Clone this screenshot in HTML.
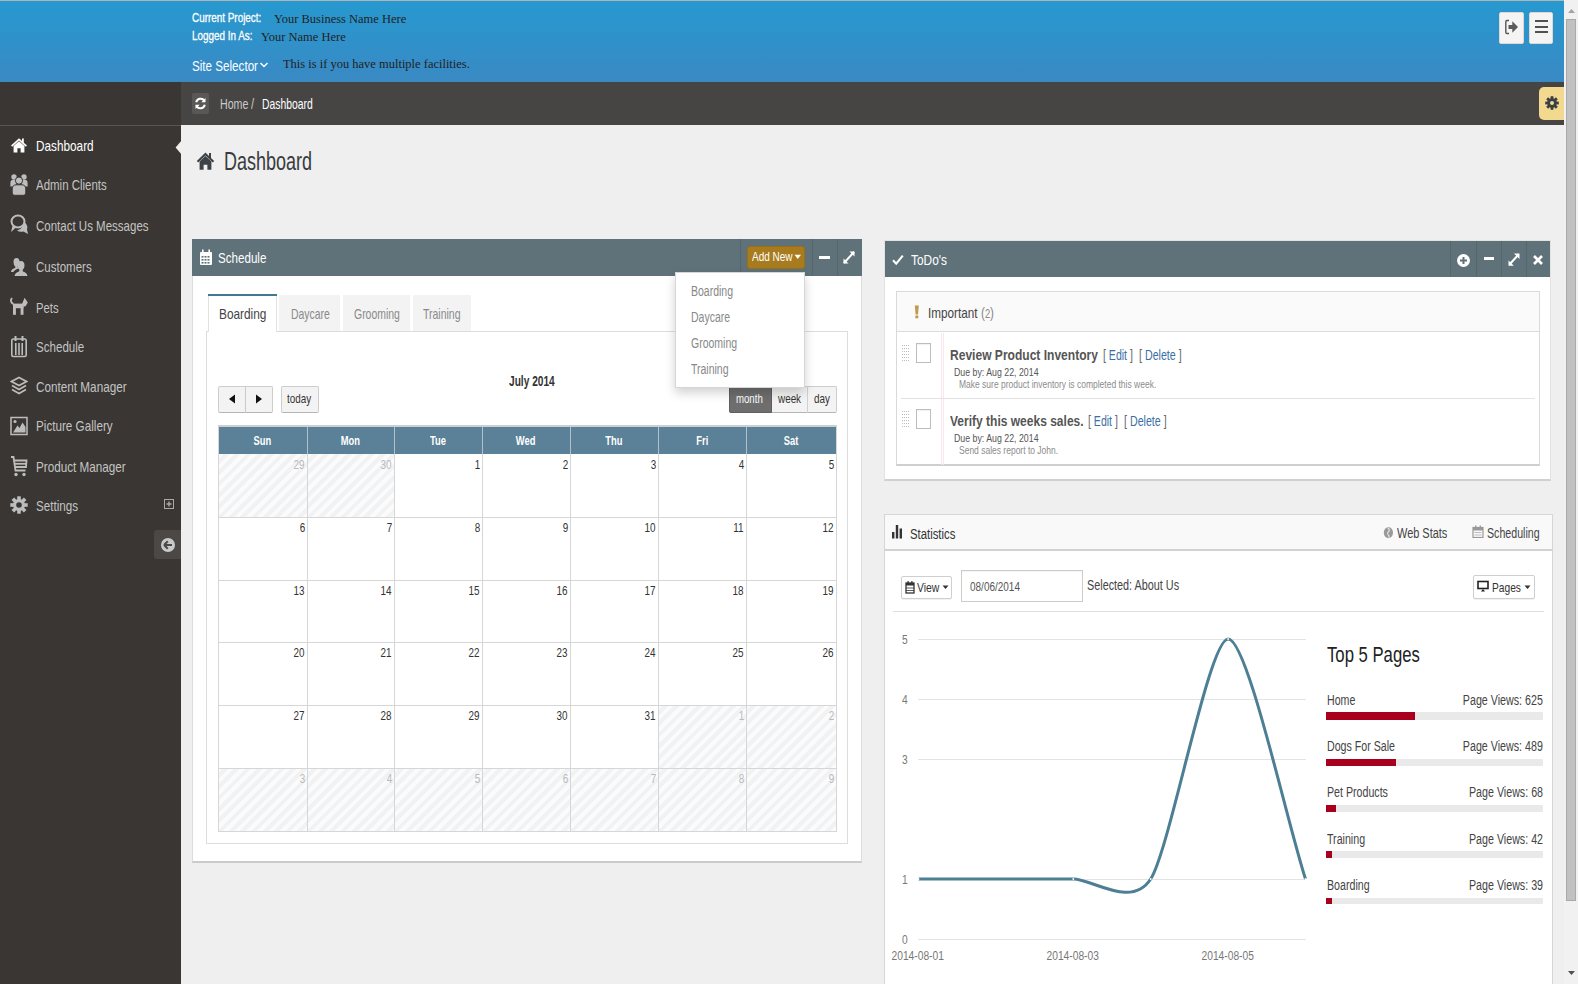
<!DOCTYPE html><html><head><meta charset="utf-8"><style>
html,body{margin:0;padding:0;width:1578px;height:984px;overflow:hidden;background:#efefef;font-family:"Liberation Sans",sans-serif;}
.r{position:absolute;box-sizing:border-box;}
.t{position:absolute;line-height:1;white-space:nowrap;}
</style></head><body>

<div class="r" style="left:0px;top:0px;width:1564px;height:1px;background:#b4b4b4"></div>
<div class="r" style="left:0px;top:1px;width:1564px;height:81px;background:linear-gradient(#2699d0,#3a89c3)"></div>
<div class="t" style="top:11.65px;left:191.70px;transform-origin:0 0;font-size:12.7px;color:#fff;transform:scaleX(0.78);-webkit-text-stroke:0.3px #fff;">Current Project:</div>
<div class="t" style="top:12.01px;left:274.00px;transform-origin:0 0;font-size:13px;color:#222;transform:scaleX(0.96);font-family:'Liberation Serif',serif;">Your Business Name Here</div>
<div class="t" style="top:29.95px;left:191.70px;transform-origin:0 0;font-size:12.7px;color:#fff;transform:scaleX(0.78);-webkit-text-stroke:0.3px #fff;">Logged In As:</div>
<div class="t" style="top:30.11px;left:260.50px;transform-origin:0 0;font-size:13px;color:#222;transform:scaleX(0.96);font-family:'Liberation Serif',serif;">Your Name Here</div>
<div class="t" style="top:58.20px;left:191.70px;transform-origin:0 0;font-size:15px;color:#fff;transform:scaleX(0.776);">Site Selector</div>
<svg class="r" style="left:259px;top:61px;" width="10" height="8" viewBox="0 0 10 8"><path d="M1.5 2 L5 5.5 L8.5 2" stroke="#fff" stroke-width="1.4" fill="none"/></svg>
<div class="t" style="top:56.61px;left:283.30px;transform-origin:0 0;font-size:13px;color:#222;transform:scaleX(0.96);font-family:'Liberation Serif',serif;">This is if you have multiple facilities.</div>
<div class="r" style="left:1499px;top:12px;width:25px;height:32px;background:#f4f4f4;border-radius:2px;border:1px solid #e0d8d0"></div>
<svg class="r" style="left:1504px;top:19px;" width="16" height="16" viewBox="0 0 16 16"><path d="M5 1.5 H3 Q1.8 1.5 1.8 2.7 V13.3 Q1.8 14.5 3 14.5 H5" stroke="#555" stroke-width="1.4" fill="none"/><path d="M4.5 6 H8.3 V2.3 L14 8 L8.3 13.7 V10 H4.5 Z" fill="#5a5a5a"/></svg>
<div class="r" style="left:1529px;top:12px;width:24px;height:32px;background:#f4f4f4;border-radius:2px;border:1px solid #e0d8d0"></div>
<div class="r" style="left:1535px;top:20px;width:13px;height:2px;background:#505050"></div>
<div class="r" style="left:1535px;top:26px;width:13px;height:2px;background:#505050"></div>
<div class="r" style="left:1535px;top:31px;width:13px;height:2px;background:#505050"></div>
<div class="r" style="left:0px;top:82px;width:181px;height:902px;background:#3a3633"></div>
<div class="r" style="left:0px;top:125px;width:181px;height:1px;background:#5a5552"></div>
<div class="t" style="top:138.10px;left:36.20px;transform-origin:0 0;font-size:15px;color:#fff;transform:scaleX(0.785);">Dashboard</div>
<div class="t" style="top:176.90px;left:36.20px;transform-origin:0 0;font-size:15px;color:#c4c4c4;transform:scaleX(0.765);">Admin Clients</div>
<div class="t" style="top:217.90px;left:36.20px;transform-origin:0 0;font-size:15px;color:#c4c4c4;transform:scaleX(0.767);">Contact Us Messages</div>
<div class="t" style="top:258.80px;left:36.20px;transform-origin:0 0;font-size:15px;color:#c4c4c4;transform:scaleX(0.768);">Customers</div>
<div class="t" style="top:299.80px;left:36.20px;transform-origin:0 0;font-size:15px;color:#c4c4c4;transform:scaleX(0.75);">Pets</div>
<div class="t" style="top:338.50px;left:36.20px;transform-origin:0 0;font-size:15px;color:#c4c4c4;transform:scaleX(0.772);">Schedule</div>
<div class="t" style="top:379.20px;left:36.20px;transform-origin:0 0;font-size:15px;color:#c4c4c4;transform:scaleX(0.782);">Content Manager</div>
<div class="t" style="top:418.30px;left:36.20px;transform-origin:0 0;font-size:15px;color:#c4c4c4;transform:scaleX(0.779);">Picture Gallery</div>
<div class="t" style="top:459.20px;left:36.20px;transform-origin:0 0;font-size:15px;color:#c4c4c4;transform:scaleX(0.78);">Product Manager</div>
<div class="t" style="top:498.10px;left:36.20px;transform-origin:0 0;font-size:15px;color:#c4c4c4;transform:scaleX(0.775);">Settings</div>
<svg class="r" style="left:10px;top:137px;" width="18" height="16" viewBox="0 0 18 16"><path d="M9 1.2 L1 8.6 L2.2 9.8 L9 3.6 L15.8 9.8 L17 8.6 L13.8 5.7 V1.5 H12 V4.1 Z" fill="#fff"/><path d="M3.6 9 L9 4.3 L14.4 9 V15.5 H10.6 V11.3 H7.4 V15.5 H3.6 Z" fill="#fff"/></svg>
<svg class="r" style="left:10px;top:173px;" width="18" height="23" viewBox="0 0 18 23"><g fill="#bdbdbd"><circle cx="4" cy="4" r="2.7"/><circle cx="14" cy="4" r="2.7"/><path d="M0.4 13.5 V10 Q0.4 6.8 3.5 6.8 H5.5 Q6.5 9 6 11.5 L5 13.5 Z"/><path d="M17.6 13.5 V10 Q17.6 6.8 14.5 6.8 H12.5 Q11.5 9 12 11.5 L13 13.5 Z"/></g><g fill="#bdbdbd" stroke="#3a3633" stroke-width="1"><circle cx="9" cy="7.6" r="3.6"/><path d="M2.2 20 V16 Q2.2 11.8 6.5 11.8 H11.5 Q15.8 11.8 15.8 16 V20 Q15.8 22.3 13.5 22.3 H4.5 Q2.2 22.3 2.2 20 Z"/></g></svg>
<svg class="r" style="left:10px;top:213px;" width="19" height="23" viewBox="0 0 19 23"><g fill="none" stroke="#bdbdbd" stroke-width="2"><ellipse cx="8" cy="8.5" rx="6.5" ry="6"/></g><path d="M2.5 13 L1 19 L6 14.5 Z" fill="#bdbdbd"/><path d="M14 9 Q18.5 12 17 16.5 L18 21 L13.5 18.5 Q9.5 19.5 7 17.5 Q12.5 16.5 14 9 Z" fill="#bdbdbd"/></svg>
<svg class="r" style="left:10px;top:257px;" width="18" height="20" viewBox="0 0 18 20"><g fill="#bdbdbd"><path d="M6.5 1 Q9.5 1 9.5 5 Q9.5 8.5 7.5 10 L8.5 11.5 Q4 13 3.5 15 H1 Q1 12 5 11 L5.5 10 Q3.5 8.5 3.5 5 Q3.5 1 6.5 1 Z"/><path d="M11 4 Q14.5 4 14.5 8.5 Q14.5 12 12.5 13 L13 14.5 Q17 15.5 17.5 19 H4.5 Q5 15.5 9 14.5 L9.5 13 Q7.5 12 7.5 8.5 Q7.5 4 11 4 Z"/></g></svg>
<svg class="r" style="left:10px;top:297px;" width="18" height="19" viewBox="0 0 18 19"><g fill="#bdbdbd"><path d="M2 1 Q0 3.5 1.8 5.8 L3.2 7" stroke="#bdbdbd" stroke-width="1.8" fill="none"/><rect x="3" y="6.6" width="10.5" height="4.6"/><rect x="3" y="10" width="2.9" height="7.8"/><rect x="10.6" y="10" width="2.9" height="7.8"/><path d="M11.8 7.4 L14.6 0.8 L17.8 5.4 L15.6 9.2 L12.4 9.8 Z"/></g></svg>
<svg class="r" style="left:10px;top:335px;" width="18" height="23" viewBox="0 0 18 23"><g fill="none" stroke="#bdbdbd" stroke-width="1.6"><rect x="1.8" y="4" width="14.4" height="17.5" rx="1.5"/></g><g fill="#bdbdbd"><rect x="4.5" y="1" width="2" height="5"/><rect x="11.5" y="1" width="2" height="5"/><rect x="5" y="8" width="1.6" height="12"/><rect x="8.2" y="8" width="1.6" height="12"/><rect x="11.4" y="8" width="1.6" height="12"/></g></svg>
<svg class="r" style="left:10px;top:376px;" width="18" height="21" viewBox="0 0 18 21"><g fill="none" stroke="#bdbdbd" stroke-width="1.7"><path d="M9 1.5 L16.5 5.5 L9 9.5 L1.5 5.5 Z"/><path d="M2 9.5 L9 13.5 L16 9.5"/><path d="M2 13.5 L9 17.5 L16 13.5"/></g></svg>
<svg class="r" style="left:10px;top:416px;" width="18" height="20" viewBox="0 0 18 20"><rect x="1" y="1.5" width="16" height="17" fill="none" stroke="#bdbdbd" stroke-width="1.5"/><circle cx="5" cy="5.5" r="1.6" fill="#bdbdbd"/><path d="M3 16.5 L7.5 9.5 L9.5 12 L12.5 6.5 L15.5 11 V16.5 Z" fill="#bdbdbd"/></svg>
<svg class="r" style="left:10px;top:455px;" width="18" height="23" viewBox="0 0 18 23"><g fill="none" stroke="#bdbdbd" stroke-width="1.8"><path d="M1 2 H3.5 L5.5 15.5 H15.5"/><path d="M4.2 5.5 H16.5 L16 12 H5.1"/><path d="M4.7 8.8 H16.2"/></g><g fill="#bdbdbd"><circle cx="6" cy="19.5" r="1.7"/><circle cx="14" cy="19.5" r="1.7"/></g></svg>
<svg class="r" style="left:10px;top:495px;" width="18" height="20" viewBox="0 0 18 20"><g transform="translate(9 10)" fill="#bdbdbd"><circle r="6"/><rect x="-1.8" y="-8.7" width="3.6" height="17.4"/><rect x="-1.8" y="-8.7" width="3.6" height="17.4" transform="rotate(45)"/><rect x="-1.8" y="-8.7" width="3.6" height="17.4" transform="rotate(90)"/><rect x="-1.8" y="-8.7" width="3.6" height="17.4" transform="rotate(135)"/><circle r="2.8" fill="#3a3633"/></g></svg>
<svg class="r" style="left:164px;top:499px;" width="10" height="10" viewBox="0 0 10 10"><rect x="0.5" y="0.5" width="9" height="9" fill="none" stroke="#aaa" stroke-width="1"/><path d="M2.5 5 H7.5 M5 2.5 V7.5" stroke="#aaa" stroke-width="1.4"/></svg>
<svg class="r" style="left:175px;top:140px;" width="7" height="15" viewBox="0 0 7 15"><path d="M7 0 L0.6 7.5 L7 15 Z" fill="#efefef"/></svg>
<div class="r" style="left:154px;top:530px;width:27px;height:29px;background:#4c4846;border-radius:3px 0 0 3px"></div>
<svg class="r" style="left:160px;top:537px;" width="16" height="16" viewBox="0 0 16 16"><circle cx="8" cy="8" r="7" fill="#c9c9c9"/><path d="M4 8 L7.8 4.2 M4 8 L7.8 11.8 M4.3 8 H12" stroke="#4c4846" stroke-width="2" fill="none"/></svg>
<div class="r" style="left:181px;top:82px;width:1383px;height:43px;background:#474544"></div>
<div class="r" style="left:192px;top:93px;width:17px;height:21px;background:#5a5856;border-radius:2px"></div>
<svg class="r" style="left:193px;top:96px;" width="15" height="15" viewBox="0 0 15 15"><path d="M3.2 6.2 A4.5 4.5 0 0 1 11.3 4.6" stroke="#fff" stroke-width="2" fill="none"/><path d="M12.5 2 V6.2 H8.3 Z" fill="#fff"/><path d="M11.8 8.8 A4.5 4.5 0 0 1 3.7 10.4" stroke="#fff" stroke-width="2" fill="none"/><path d="M2.5 13 V8.8 H6.7 Z" fill="#fff"/></svg>
<div class="t" style="top:96.63px;left:219.50px;transform-origin:0 0;font-size:14.5px;color:#c9c9c9;transform:scaleX(0.735);">Home</div>
<div class="t" style="top:96.63px;left:251.00px;transform-origin:0 0;font-size:14.5px;color:#c9c9c9;transform:scaleX(0.77);">/</div>
<div class="t" style="top:96.63px;left:262.20px;transform-origin:0 0;font-size:14.5px;color:#fff;transform:scaleX(0.715);">Dashboard</div>
<div class="r" style="left:1539px;top:87px;width:25px;height:33px;background:#f3d98f;border-radius:5px 0 0 5px"></div>
<svg class="r" style="left:1545px;top:96px;" width="14" height="14" viewBox="0 0 14 14"><g transform="translate(7 7)" fill="#3a3f44"><circle r="4.8"/><rect x="-1.4" y="-6.8" width="2.8" height="3.2" transform="rotate(0)"/><rect x="-1.4" y="-6.8" width="2.8" height="3.2" transform="rotate(45)"/><rect x="-1.4" y="-6.8" width="2.8" height="3.2" transform="rotate(90)"/><rect x="-1.4" y="-6.8" width="2.8" height="3.2" transform="rotate(135)"/><rect x="-1.4" y="-6.8" width="2.8" height="3.2" transform="rotate(180)"/><rect x="-1.4" y="-6.8" width="2.8" height="3.2" transform="rotate(225)"/><rect x="-1.4" y="-6.8" width="2.8" height="3.2" transform="rotate(270)"/><rect x="-1.4" y="-6.8" width="2.8" height="3.2" transform="rotate(315)"/><circle r="2" fill="#f3d98f"/></g></svg>
<svg class="r" style="left:196px;top:151px;" width="19" height="19" viewBox="0 0 19 19"><path d="M9.5 1.5 L0.8 10 L2.3 11.5 L9.5 4.5 L16.7 11.5 L18.2 10 L15 6.9 V2 H13 V5 Z" fill="#3d4247"/><path d="M3.6 10.6 L9.5 5 L15.4 10.6 V18.8 H11.4 V13.8 H7.6 V18.8 H3.6 Z" fill="#3d4247"/></svg>
<div class="t" style="top:148.64px;left:224.10px;transform-origin:0 0;font-size:25px;color:#383c40;transform:scaleX(0.72);">Dashboard</div>
<div class="r" style="left:192px;top:239px;width:670px;height:624px;background:#fff;border:1px solid #dcdcdc;border-bottom:2px solid #cbcbcb"></div>
<div class="r" style="left:192px;top:239px;width:670px;height:37px;background:#5f7179"></div>
<div class="r" style="left:740px;top:239px;width:1px;height:37px;background:#56666c"></div>
<div class="r" style="left:812px;top:239px;width:1px;height:37px;background:#56666c"></div>
<div class="r" style="left:837px;top:239px;width:1px;height:37px;background:#56666c"></div>
<svg class="r" style="left:199px;top:249px;" width="14" height="17" viewBox="0 0 14 17"><g fill="#fff"><rect x="1" y="3" width="12" height="13" rx="1"/></g><g fill="#5f7179"><rect x="2.5" y="7" width="2" height="1.6"/><rect x="5.5" y="7" width="2" height="1.6"/><rect x="8.5" y="7" width="2" height="1.6"/><rect x="2.5" y="10" width="2" height="1.6"/><rect x="5.5" y="10" width="2" height="1.6"/><rect x="8.5" y="10" width="2" height="1.6"/><rect x="2.5" y="13" width="2" height="1.6"/><rect x="5.5" y="13" width="2" height="1.6"/><rect x="8.5" y="13" width="2" height="1.6"/></g><g fill="#fff"><rect x="3" y="0.5" width="1.6" height="3.5"/><rect x="9.4" y="0.5" width="1.6" height="3.5"/></g></svg>
<div class="t" style="top:251.23px;left:217.70px;transform-origin:0 0;font-size:14.5px;color:#fff;transform:scaleX(0.8);">Schedule</div>
<div class="r" style="left:747px;top:246px;width:58px;height:23px;background:#a77b1e;border:1px solid #9c7012;border-radius:3px"></div>
<div class="t" style="top:250.47px;left:751.90px;transform-origin:0 0;font-size:13.5px;color:#fff;transform:scaleX(0.74);">Add New</div>
<svg class="r" style="left:794px;top:254px;" width="8" height="6" viewBox="0 0 8 6"><path d="M0.5 0.8 H7 L3.75 5 Z" fill="#fff"/></svg>
<div class="r" style="left:819px;top:256px;width:11px;height:3px;background:#fff"></div>
<svg class="r" style="left:842px;top:250px;" width="14" height="15" viewBox="0 0 14 15"><path d="M2 13 L12 2" stroke="#fff" stroke-width="2"/><path d="M7.5 1.5 H12.5 V6.5 Z M1.5 8.5 V13.5 H6.5 Z" fill="#fff"/></svg>
<div class="r" style="left:206px;top:331px;width:642px;height:513px;border:1px solid #dddddd;background:#fff"></div>
<div class="r" style="left:208px;top:294px;width:69px;height:38px;background:#fff;border-left:1px solid #e2e2e2;border-right:1px solid #e2e2e2"></div>
<div class="r" style="left:208px;top:294px;width:69px;height:2px;background:#3d7a91"></div>
<div class="r" style="left:279px;top:295px;width:61px;height:36px;background:#f3f3f3"></div>
<div class="r" style="left:343px;top:295px;width:67px;height:36px;background:#f3f3f3"></div>
<div class="r" style="left:413px;top:295px;width:58px;height:36px;background:#f3f3f3"></div>
<div class="t" style="top:306.00px;left:218.60px;transform-origin:0 0;font-size:15px;color:#444;transform:scaleX(0.79);">Boarding</div>
<div class="t" style="top:306.00px;left:290.50px;transform-origin:0 0;font-size:15px;color:#8a8a8a;transform:scaleX(0.695);">Daycare</div>
<div class="t" style="top:306.00px;left:353.50px;transform-origin:0 0;font-size:15px;color:#8a8a8a;transform:scaleX(0.697);">Grooming</div>
<div class="t" style="top:306.00px;left:422.70px;transform-origin:0 0;font-size:15px;color:#8a8a8a;transform:scaleX(0.7);">Training</div>
<div class="r" style="left:218px;top:386px;width:55px;height:27px;background:#f3f3f3;border:1px solid #cdcdcd;border-bottom-color:#b5b5b5;border-radius:2px"></div>
<div class="r" style="left:245px;top:386px;width:1px;height:27px;background:#c9c9c9"></div>
<svg class="r" style="left:226px;top:393px;" width="12" height="12" viewBox="0 0 12 12"><path d="M9 1.5 V10.5 L3 6 Z" fill="#111"/></svg>
<svg class="r" style="left:253px;top:393px;" width="12" height="12" viewBox="0 0 12 12"><path d="M3 1.5 V10.5 L9 6 Z" fill="#111"/></svg>
<div class="r" style="left:281px;top:386px;width:38px;height:27px;background:#f3f3f3;border:1px solid #cdcdcd;border-bottom-color:#b5b5b5;border-radius:2px"></div>
<div class="t" style="top:392.00px;left:287.00px;transform-origin:0 0;font-size:13px;color:#333;transform:scaleX(0.76);">today</div>
<div class="t" style="top:374.43px;left:508.90px;transform-origin:0 0;font-size:14.5px;color:#333;transform:scaleX(0.7);font-weight:bold;">July 2014</div>
<div class="r" style="left:729px;top:386px;width:108px;height:27px;background:#f3f3f3;border:1px solid #cdcdcd;border-bottom-color:#b5b5b5;border-radius:2px"></div>
<div class="r" style="left:729px;top:386px;width:43px;height:27px;background:#6e6e6e;border:1px solid #5f5f5f;border-radius:2px 0 0 2px"></div>
<div class="r" style="left:807px;top:386px;width:1px;height:27px;background:#d0d0d0"></div>
<div class="t" style="top:392.00px;left:735.50px;transform-origin:0 0;font-size:13px;color:#fff;transform:scaleX(0.74);">month</div>
<div class="t" style="top:392.00px;left:777.50px;transform-origin:0 0;font-size:13px;color:#333;transform:scaleX(0.76);">week</div>
<div class="t" style="top:392.00px;left:813.50px;transform-origin:0 0;font-size:13px;color:#333;transform:scaleX(0.76);">day</div>
<div class="r" style="left:218px;top:425px;width:619px;height:2px;background:#cfcfcf"></div>
<div class="r" style="left:218px;top:427px;width:619px;height:27px;background:#5b8198"></div>
<div class="t" style="top:433.70px;left:-137.50px;width:800px;text-align:center;font-size:13px;color:#fff;font-weight:bold;"><span style="display:inline-block;transform:scaleX(0.72);transform-origin:50% 0">Sun</span></div>
<div class="t" style="top:433.70px;left:-49.50px;width:800px;text-align:center;font-size:13px;color:#fff;font-weight:bold;"><span style="display:inline-block;transform:scaleX(0.72);transform-origin:50% 0">Mon</span></div>
<div class="t" style="top:433.70px;left:38.00px;width:800px;text-align:center;font-size:13px;color:#fff;font-weight:bold;"><span style="display:inline-block;transform:scaleX(0.72);transform-origin:50% 0">Tue</span></div>
<div class="t" style="top:433.70px;left:126.00px;width:800px;text-align:center;font-size:13px;color:#fff;font-weight:bold;"><span style="display:inline-block;transform:scaleX(0.72);transform-origin:50% 0">Wed</span></div>
<div class="t" style="top:433.70px;left:214.00px;width:800px;text-align:center;font-size:13px;color:#fff;font-weight:bold;"><span style="display:inline-block;transform:scaleX(0.72);transform-origin:50% 0">Thu</span></div>
<div class="t" style="top:433.70px;left:302.00px;width:800px;text-align:center;font-size:13px;color:#fff;font-weight:bold;"><span style="display:inline-block;transform:scaleX(0.72);transform-origin:50% 0">Fri</span></div>
<div class="t" style="top:433.70px;left:391.00px;width:800px;text-align:center;font-size:13px;color:#fff;font-weight:bold;"><span style="display:inline-block;transform:scaleX(0.72);transform-origin:50% 0">Sat</span></div>
<div class="r" style="left:218px;top:454px;width:89px;height:63px;background:repeating-linear-gradient(135deg,#fbfbfb 0px,#fbfbfb 4px,#f1f2f4 4px,#f1f2f4 8px)"></div>
<div class="t" style="top:458.00px;right:1273.20px;transform-origin:100% 0;font-size:13px;color:#b9b9b9;transform:scaleX(0.76);">29</div>
<div class="r" style="left:307px;top:454px;width:87px;height:63px;background:repeating-linear-gradient(135deg,#fbfbfb 0px,#fbfbfb 4px,#f1f2f4 4px,#f1f2f4 8px)"></div>
<div class="t" style="top:458.00px;right:1186.20px;transform-origin:100% 0;font-size:13px;color:#b9b9b9;transform:scaleX(0.76);">30</div>
<div class="t" style="top:458.00px;right:1098.20px;transform-origin:100% 0;font-size:13px;color:#333;transform:scaleX(0.76);">1</div>
<div class="t" style="top:458.00px;right:1010.20px;transform-origin:100% 0;font-size:13px;color:#333;transform:scaleX(0.76);">2</div>
<div class="t" style="top:458.00px;right:922.20px;transform-origin:100% 0;font-size:13px;color:#333;transform:scaleX(0.76);">3</div>
<div class="t" style="top:458.00px;right:834.20px;transform-origin:100% 0;font-size:13px;color:#333;transform:scaleX(0.76);">4</div>
<div class="t" style="top:458.00px;right:744.20px;transform-origin:100% 0;font-size:13px;color:#333;transform:scaleX(0.76);">5</div>
<div class="t" style="top:521.00px;right:1273.20px;transform-origin:100% 0;font-size:13px;color:#333;transform:scaleX(0.76);">6</div>
<div class="t" style="top:521.00px;right:1186.20px;transform-origin:100% 0;font-size:13px;color:#333;transform:scaleX(0.76);">7</div>
<div class="t" style="top:521.00px;right:1098.20px;transform-origin:100% 0;font-size:13px;color:#333;transform:scaleX(0.76);">8</div>
<div class="t" style="top:521.00px;right:1010.20px;transform-origin:100% 0;font-size:13px;color:#333;transform:scaleX(0.76);">9</div>
<div class="t" style="top:521.00px;right:922.20px;transform-origin:100% 0;font-size:13px;color:#333;transform:scaleX(0.76);">10</div>
<div class="t" style="top:521.00px;right:834.20px;transform-origin:100% 0;font-size:13px;color:#333;transform:scaleX(0.76);">11</div>
<div class="t" style="top:521.00px;right:744.20px;transform-origin:100% 0;font-size:13px;color:#333;transform:scaleX(0.76);">12</div>
<div class="t" style="top:584.00px;right:1273.20px;transform-origin:100% 0;font-size:13px;color:#333;transform:scaleX(0.76);">13</div>
<div class="t" style="top:584.00px;right:1186.20px;transform-origin:100% 0;font-size:13px;color:#333;transform:scaleX(0.76);">14</div>
<div class="t" style="top:584.00px;right:1098.20px;transform-origin:100% 0;font-size:13px;color:#333;transform:scaleX(0.76);">15</div>
<div class="t" style="top:584.00px;right:1010.20px;transform-origin:100% 0;font-size:13px;color:#333;transform:scaleX(0.76);">16</div>
<div class="t" style="top:584.00px;right:922.20px;transform-origin:100% 0;font-size:13px;color:#333;transform:scaleX(0.76);">17</div>
<div class="t" style="top:584.00px;right:834.20px;transform-origin:100% 0;font-size:13px;color:#333;transform:scaleX(0.76);">18</div>
<div class="t" style="top:584.00px;right:744.20px;transform-origin:100% 0;font-size:13px;color:#333;transform:scaleX(0.76);">19</div>
<div class="t" style="top:646.00px;right:1273.20px;transform-origin:100% 0;font-size:13px;color:#333;transform:scaleX(0.76);">20</div>
<div class="t" style="top:646.00px;right:1186.20px;transform-origin:100% 0;font-size:13px;color:#333;transform:scaleX(0.76);">21</div>
<div class="t" style="top:646.00px;right:1098.20px;transform-origin:100% 0;font-size:13px;color:#333;transform:scaleX(0.76);">22</div>
<div class="t" style="top:646.00px;right:1010.20px;transform-origin:100% 0;font-size:13px;color:#333;transform:scaleX(0.76);">23</div>
<div class="t" style="top:646.00px;right:922.20px;transform-origin:100% 0;font-size:13px;color:#333;transform:scaleX(0.76);">24</div>
<div class="t" style="top:646.00px;right:834.20px;transform-origin:100% 0;font-size:13px;color:#333;transform:scaleX(0.76);">25</div>
<div class="t" style="top:646.00px;right:744.20px;transform-origin:100% 0;font-size:13px;color:#333;transform:scaleX(0.76);">26</div>
<div class="t" style="top:709.00px;right:1273.20px;transform-origin:100% 0;font-size:13px;color:#333;transform:scaleX(0.76);">27</div>
<div class="t" style="top:709.00px;right:1186.20px;transform-origin:100% 0;font-size:13px;color:#333;transform:scaleX(0.76);">28</div>
<div class="t" style="top:709.00px;right:1098.20px;transform-origin:100% 0;font-size:13px;color:#333;transform:scaleX(0.76);">29</div>
<div class="t" style="top:709.00px;right:1010.20px;transform-origin:100% 0;font-size:13px;color:#333;transform:scaleX(0.76);">30</div>
<div class="t" style="top:709.00px;right:922.20px;transform-origin:100% 0;font-size:13px;color:#333;transform:scaleX(0.76);">31</div>
<div class="r" style="left:658px;top:705px;width:88px;height:63px;background:repeating-linear-gradient(135deg,#fbfbfb 0px,#fbfbfb 4px,#f1f2f4 4px,#f1f2f4 8px)"></div>
<div class="t" style="top:709.00px;right:834.20px;transform-origin:100% 0;font-size:13px;color:#b9b9b9;transform:scaleX(0.76);">1</div>
<div class="r" style="left:746px;top:705px;width:90px;height:63px;background:repeating-linear-gradient(135deg,#fbfbfb 0px,#fbfbfb 4px,#f1f2f4 4px,#f1f2f4 8px)"></div>
<div class="t" style="top:709.00px;right:744.20px;transform-origin:100% 0;font-size:13px;color:#b9b9b9;transform:scaleX(0.76);">2</div>
<div class="r" style="left:218px;top:768px;width:89px;height:63px;background:repeating-linear-gradient(135deg,#fbfbfb 0px,#fbfbfb 4px,#f1f2f4 4px,#f1f2f4 8px)"></div>
<div class="t" style="top:772.00px;right:1273.20px;transform-origin:100% 0;font-size:13px;color:#b9b9b9;transform:scaleX(0.76);">3</div>
<div class="r" style="left:307px;top:768px;width:87px;height:63px;background:repeating-linear-gradient(135deg,#fbfbfb 0px,#fbfbfb 4px,#f1f2f4 4px,#f1f2f4 8px)"></div>
<div class="t" style="top:772.00px;right:1186.20px;transform-origin:100% 0;font-size:13px;color:#b9b9b9;transform:scaleX(0.76);">4</div>
<div class="r" style="left:394px;top:768px;width:88px;height:63px;background:repeating-linear-gradient(135deg,#fbfbfb 0px,#fbfbfb 4px,#f1f2f4 4px,#f1f2f4 8px)"></div>
<div class="t" style="top:772.00px;right:1098.20px;transform-origin:100% 0;font-size:13px;color:#b9b9b9;transform:scaleX(0.76);">5</div>
<div class="r" style="left:482px;top:768px;width:88px;height:63px;background:repeating-linear-gradient(135deg,#fbfbfb 0px,#fbfbfb 4px,#f1f2f4 4px,#f1f2f4 8px)"></div>
<div class="t" style="top:772.00px;right:1010.20px;transform-origin:100% 0;font-size:13px;color:#b9b9b9;transform:scaleX(0.76);">6</div>
<div class="r" style="left:570px;top:768px;width:88px;height:63px;background:repeating-linear-gradient(135deg,#fbfbfb 0px,#fbfbfb 4px,#f1f2f4 4px,#f1f2f4 8px)"></div>
<div class="t" style="top:772.00px;right:922.20px;transform-origin:100% 0;font-size:13px;color:#b9b9b9;transform:scaleX(0.76);">7</div>
<div class="r" style="left:658px;top:768px;width:88px;height:63px;background:repeating-linear-gradient(135deg,#fbfbfb 0px,#fbfbfb 4px,#f1f2f4 4px,#f1f2f4 8px)"></div>
<div class="t" style="top:772.00px;right:834.20px;transform-origin:100% 0;font-size:13px;color:#b9b9b9;transform:scaleX(0.76);">8</div>
<div class="r" style="left:746px;top:768px;width:90px;height:63px;background:repeating-linear-gradient(135deg,#fbfbfb 0px,#fbfbfb 4px,#f1f2f4 4px,#f1f2f4 8px)"></div>
<div class="t" style="top:772.00px;right:744.20px;transform-origin:100% 0;font-size:13px;color:#b9b9b9;transform:scaleX(0.76);">9</div>
<div class="r" style="left:218px;top:427px;width:1px;height:404px;background:#d6d6d6"></div>
<div class="r" style="left:307px;top:427px;width:1px;height:404px;background:#d6d6d6"></div>
<div class="r" style="left:394px;top:427px;width:1px;height:404px;background:#d6d6d6"></div>
<div class="r" style="left:482px;top:427px;width:1px;height:404px;background:#d6d6d6"></div>
<div class="r" style="left:570px;top:427px;width:1px;height:404px;background:#d6d6d6"></div>
<div class="r" style="left:658px;top:427px;width:1px;height:404px;background:#d6d6d6"></div>
<div class="r" style="left:746px;top:427px;width:1px;height:404px;background:#d6d6d6"></div>
<div class="r" style="left:836px;top:427px;width:1px;height:404px;background:#d6d6d6"></div>
<div class="r" style="left:218px;top:517px;width:619px;height:1px;background:#d6d6d6"></div>
<div class="r" style="left:218px;top:580px;width:619px;height:1px;background:#d6d6d6"></div>
<div class="r" style="left:218px;top:642px;width:619px;height:1px;background:#d6d6d6"></div>
<div class="r" style="left:218px;top:705px;width:619px;height:1px;background:#d6d6d6"></div>
<div class="r" style="left:218px;top:768px;width:619px;height:1px;background:#d6d6d6"></div>
<div class="r" style="left:218px;top:831px;width:619px;height:1px;background:#d6d6d6"></div>
<div class="r" style="left:307px;top:427px;width:1px;height:27px;background:#b4c0c8"></div>
<div class="r" style="left:394px;top:427px;width:1px;height:27px;background:#b4c0c8"></div>
<div class="r" style="left:482px;top:427px;width:1px;height:27px;background:#b4c0c8"></div>
<div class="r" style="left:570px;top:427px;width:1px;height:27px;background:#b4c0c8"></div>
<div class="r" style="left:658px;top:427px;width:1px;height:27px;background:#b4c0c8"></div>
<div class="r" style="left:746px;top:427px;width:1px;height:27px;background:#b4c0c8"></div>
<div class="r" style="left:675px;top:272px;width:130px;height:116px;background:#fff;border:1px solid #d6d6d6;box-shadow:0 5px 10px rgba(0,0,0,.18)"></div>
<div class="t" style="top:283.95px;left:691.20px;transform-origin:0 0;font-size:14px;color:#888;transform:scaleX(0.75);">Boarding</div>
<div class="t" style="top:309.55px;left:691.20px;transform-origin:0 0;font-size:14px;color:#888;transform:scaleX(0.75);">Daycare</div>
<div class="t" style="top:335.65px;left:691.20px;transform-origin:0 0;font-size:14px;color:#888;transform:scaleX(0.75);">Grooming</div>
<div class="t" style="top:361.55px;left:691.20px;transform-origin:0 0;font-size:14px;color:#888;transform:scaleX(0.75);">Training</div>
<div class="r" style="left:884px;top:240px;width:667px;height:241px;background:#fff;border:1px solid #e2e2e2;border-bottom:2px solid #d0d0d0"></div>
<div class="r" style="left:885px;top:241px;width:665px;height:36px;background:#5f7179"></div>
<div class="r" style="left:1450px;top:241px;width:1px;height:36px;background:#56666c"></div>
<div class="r" style="left:1476px;top:241px;width:1px;height:36px;background:#56666c"></div>
<div class="r" style="left:1501px;top:241px;width:1px;height:36px;background:#56666c"></div>
<div class="r" style="left:1526px;top:241px;width:1px;height:36px;background:#56666c"></div>
<svg class="r" style="left:891px;top:254px;" width="14" height="12" viewBox="0 0 14 12"><path d="M2 6.2 L5.2 9.6 L11.8 1.6" stroke="#fff" stroke-width="2.1" fill="none"/></svg>
<div class="t" style="top:252.30px;left:910.50px;transform-origin:0 0;font-size:15px;color:#fff;transform:scaleX(0.793);">ToDo's</div>
<svg class="r" style="left:1456px;top:253px;" width="15" height="15" viewBox="0 0 15 15"><circle cx="7.5" cy="7.5" r="6.5" fill="#fff"/><path d="M7.5 4 V11 M4 7.5 H11" stroke="#5f7179" stroke-width="2"/></svg>
<div class="r" style="left:1484px;top:257px;width:10px;height:3px;background:#fff"></div>
<svg class="r" style="left:1507px;top:252px;" width="14" height="15" viewBox="0 0 14 15"><path d="M2.5 12.5 L11.5 2.5" stroke="#fff" stroke-width="2"/><path d="M7 1.5 H12.5 V7 Z M1.5 8.5 V13.8 H6.8 Z" fill="#fff"/></svg>
<svg class="r" style="left:1532px;top:254px;" width="12" height="12" viewBox="0 0 12 12"><path d="M2 2 L10 10 M10 2 L2 10" stroke="#fff" stroke-width="2.6"/></svg>
<div class="r" style="left:896px;top:291px;width:644px;height:175px;background:#fff;border:1px solid #d9d9d9;border-bottom:2px solid #cfcfcf"></div>
<div class="r" style="left:897px;top:292px;width:642px;height:40px;background:#fafafa;border-bottom:1px solid #dcdcdc"></div>
<svg class="r" style="left:914px;top:305px;" width="6" height="14" viewBox="0 0 6 14"><path d="M0.8 0.5 H4.8 L4 9.5 H1.6 Z" fill="#c29a4c"/><rect x="1.3" y="10.5" width="3" height="2.8" fill="#c29a4c"/></svg>
<div class="t" style="top:304.90px;left:928.00px;transform-origin:0 0;font-size:15px;color:#444;transform:scaleX(0.78);">Important</div>
<div class="t" style="top:304.90px;left:981.00px;transform-origin:0 0;font-size:15px;color:#888;transform:scaleX(0.78);">(<span style="font-size:12px">2</span>)</div>
<div class="r" style="left:941px;top:333px;width:1px;height:132px;background:#fbe6ec"></div>
<div class="r" style="left:943px;top:333px;width:1px;height:132px;background:#fbe6ec"></div>
<div class="r" style="left:901px;top:398px;width:634px;height:1px;background:#e2e2e2"></div>
<svg class="r" style="left:902px;top:345px;" width="8" height="17" viewBox="0 0 8 17"><rect x="0" y="0" width="1" height="1" fill="#bcbcbc"/><rect x="0" y="3" width="1" height="1" fill="#bcbcbc"/><rect x="0" y="6" width="1" height="1" fill="#bcbcbc"/><rect x="0" y="9" width="1" height="1" fill="#bcbcbc"/><rect x="0" y="12" width="1" height="1" fill="#bcbcbc"/><rect x="0" y="15" width="1" height="1" fill="#bcbcbc"/><rect x="2" y="0" width="1" height="1" fill="#bcbcbc"/><rect x="2" y="3" width="1" height="1" fill="#bcbcbc"/><rect x="2" y="6" width="1" height="1" fill="#bcbcbc"/><rect x="2" y="9" width="1" height="1" fill="#bcbcbc"/><rect x="2" y="12" width="1" height="1" fill="#bcbcbc"/><rect x="2" y="15" width="1" height="1" fill="#bcbcbc"/><rect x="4" y="0" width="1" height="1" fill="#bcbcbc"/><rect x="4" y="3" width="1" height="1" fill="#bcbcbc"/><rect x="4" y="6" width="1" height="1" fill="#bcbcbc"/><rect x="4" y="9" width="1" height="1" fill="#bcbcbc"/><rect x="4" y="12" width="1" height="1" fill="#bcbcbc"/><rect x="4" y="15" width="1" height="1" fill="#bcbcbc"/><rect x="6" y="0" width="1" height="1" fill="#bcbcbc"/><rect x="6" y="3" width="1" height="1" fill="#bcbcbc"/><rect x="6" y="6" width="1" height="1" fill="#bcbcbc"/><rect x="6" y="9" width="1" height="1" fill="#bcbcbc"/><rect x="6" y="12" width="1" height="1" fill="#bcbcbc"/><rect x="6" y="15" width="1" height="1" fill="#bcbcbc"/></svg>
<svg class="r" style="left:902px;top:411px;" width="8" height="17" viewBox="0 0 8 17"><rect x="0" y="0" width="1" height="1" fill="#bcbcbc"/><rect x="0" y="3" width="1" height="1" fill="#bcbcbc"/><rect x="0" y="6" width="1" height="1" fill="#bcbcbc"/><rect x="0" y="9" width="1" height="1" fill="#bcbcbc"/><rect x="0" y="12" width="1" height="1" fill="#bcbcbc"/><rect x="0" y="15" width="1" height="1" fill="#bcbcbc"/><rect x="2" y="0" width="1" height="1" fill="#bcbcbc"/><rect x="2" y="3" width="1" height="1" fill="#bcbcbc"/><rect x="2" y="6" width="1" height="1" fill="#bcbcbc"/><rect x="2" y="9" width="1" height="1" fill="#bcbcbc"/><rect x="2" y="12" width="1" height="1" fill="#bcbcbc"/><rect x="2" y="15" width="1" height="1" fill="#bcbcbc"/><rect x="4" y="0" width="1" height="1" fill="#bcbcbc"/><rect x="4" y="3" width="1" height="1" fill="#bcbcbc"/><rect x="4" y="6" width="1" height="1" fill="#bcbcbc"/><rect x="4" y="9" width="1" height="1" fill="#bcbcbc"/><rect x="4" y="12" width="1" height="1" fill="#bcbcbc"/><rect x="4" y="15" width="1" height="1" fill="#bcbcbc"/><rect x="6" y="0" width="1" height="1" fill="#bcbcbc"/><rect x="6" y="3" width="1" height="1" fill="#bcbcbc"/><rect x="6" y="6" width="1" height="1" fill="#bcbcbc"/><rect x="6" y="9" width="1" height="1" fill="#bcbcbc"/><rect x="6" y="12" width="1" height="1" fill="#bcbcbc"/><rect x="6" y="15" width="1" height="1" fill="#bcbcbc"/></svg>
<div class="r" style="left:916px;top:343px;width:15px;height:20px;background:#fff;border:1px solid #bdbdbd;box-shadow:inset 0 1px 1px rgba(0,0,0,.06)"></div>
<div class="r" style="left:916px;top:409px;width:15px;height:20px;background:#fff;border:1px solid #bdbdbd;box-shadow:inset 0 1px 1px rgba(0,0,0,.06)"></div>
<div class="t" style="top:347.30px;left:950.40px;transform-origin:0 0;font-size:15px;color:#555;transform:scaleX(0.803);font-weight:bold;">Review Product Inventory</div>
<div class="t" style="top:348.15px;left:1102.80px;transform-origin:0 0;font-size:14px;color:#666;transform:scaleX(0.754);">[ <span style="color:#3b6fa6">Edit</span> ]</div>
<div class="t" style="top:348.15px;left:1139.00px;transform-origin:0 0;font-size:14px;color:#666;transform:scaleX(0.762);">[ <span style="color:#3b6fa6">Delete</span> ]</div>
<div class="t" style="top:366.69px;left:954.20px;transform-origin:0 0;font-size:11px;color:#555;transform:scaleX(0.799);">Due by: Aug 22, 2014</div>
<div class="t" style="top:380.34px;left:958.70px;transform-origin:0 0;font-size:10px;color:#8c8c8c;transform:scaleX(0.849);">Make sure product inventory is completed this week.</div>
<div class="t" style="top:413.30px;left:950.40px;transform-origin:0 0;font-size:15px;color:#555;transform:scaleX(0.801);font-weight:bold;">Verify this weeks sales.</div>
<div class="t" style="top:414.15px;left:1087.80px;transform-origin:0 0;font-size:14px;color:#666;transform:scaleX(0.754);">[ <span style="color:#3b6fa6">Edit</span> ]</div>
<div class="t" style="top:414.15px;left:1124.30px;transform-origin:0 0;font-size:14px;color:#666;transform:scaleX(0.762);">[ <span style="color:#3b6fa6">Delete</span> ]</div>
<div class="t" style="top:432.69px;left:954.20px;transform-origin:0 0;font-size:11px;color:#555;transform:scaleX(0.799);">Due by: Aug 22, 2014</div>
<div class="t" style="top:446.34px;left:958.70px;transform-origin:0 0;font-size:10px;color:#8c8c8c;transform:scaleX(0.849);">Send sales report to John.</div>
<div class="r" style="left:884px;top:514px;width:669px;height:486px;background:#fff;border:1px solid #d6d6d6"></div>
<div class="r" style="left:884px;top:514px;width:669px;height:37px;background:#f9f9f9;border:1px solid #d6d6d6;border-bottom:2px solid #d2d2d2"></div>
<svg class="r" style="left:891px;top:524px;" width="12" height="15" viewBox="0 0 12 15"><g fill="#333"><rect x="1" y="8" width="2.4" height="6.5"/><rect x="4.8" y="1" width="2.4" height="13.5"/><rect x="8.6" y="4.5" width="2.4" height="10"/></g></svg>
<div class="t" style="top:526.95px;left:909.50px;transform-origin:0 0;font-size:14px;color:#333;transform:scaleX(0.809);">Statistics</div>
<svg class="r" style="left:1383px;top:526px;" width="11" height="13" viewBox="0 0 11 13"><ellipse cx="5.4" cy="6.6" rx="4.6" ry="5.6" fill="#9a9a9a"/><path d="M4.5 1.5 Q7 3 6 5.5 Q4 6 5 8.5 Q6.5 9.5 6 12" stroke="#e6e6e6" stroke-width="1.1" fill="none"/></svg>
<div class="t" style="top:526.15px;left:1396.50px;transform-origin:0 0;font-size:14px;color:#444;transform:scaleX(0.782);">Web Stats</div>
<svg class="r" style="left:1472px;top:525px;" width="12" height="13" viewBox="0 0 12 13"><rect x="1" y="2.5" width="10" height="10" fill="none" stroke="#999" stroke-width="1.2"/><rect x="1" y="2.5" width="10" height="3" fill="#999"/><rect x="3" y="0.5" width="1.4" height="3" fill="#999"/><rect x="7.6" y="0.5" width="1.4" height="3" fill="#999"/><g fill="#bbb"><rect x="2.5" y="7" width="7" height="1"/><rect x="2.5" y="9.5" width="7" height="1"/></g></svg>
<div class="t" style="top:526.15px;left:1487.00px;transform-origin:0 0;font-size:14px;color:#444;transform:scaleX(0.759);">Scheduling</div>
<div class="r" style="left:901px;top:576px;width:51px;height:23px;background:#fff;border:1px solid #cfcfcf;border-radius:2px;box-shadow:0 1px 1px rgba(0,0,0,.06)"></div>
<svg class="r" style="left:905px;top:580px;" width="10" height="14" viewBox="0 0 10 14"><rect x="1" y="3" width="8" height="10" fill="none" stroke="#333" stroke-width="1.3"/><rect x="1" y="3" width="8" height="2.5" fill="#333"/><rect x="2.5" y="1" width="1.2" height="3" fill="#333"/><rect x="6.3" y="1" width="1.2" height="3" fill="#333"/><path d="M1 8 H9 M1 10.5 H9" stroke="#333" stroke-width="0.8"/></svg>
<div class="t" style="top:581.00px;left:917.00px;transform-origin:0 0;font-size:13px;color:#333;transform:scaleX(0.8);">View</div>
<svg class="r" style="left:941.5px;top:585px;" width="7" height="5" viewBox="0 0 7 5"><path d="M0.5 0.5 H6.5 L3.5 4 Z" fill="#333"/></svg>
<div class="r" style="left:961px;top:570px;width:122px;height:32px;background:#fff;border:1px solid #cccccc;box-shadow:inset 0 1px 1px rgba(0,0,0,.05)"></div>
<div class="t" style="top:579.60px;left:969.50px;transform-origin:0 0;font-size:13px;color:#555;transform:scaleX(0.768);">08/06/2014</div>
<div class="t" style="top:577.65px;left:1086.90px;transform-origin:0 0;font-size:14px;color:#444;transform:scaleX(0.773);">Selected: About Us</div>
<div class="r" style="left:1473px;top:575px;width:62px;height:24px;background:#fff;border:1px solid #cfcfcf;border-radius:2px;box-shadow:0 1px 1px rgba(0,0,0,.06)"></div>
<svg class="r" style="left:1477px;top:580px;" width="12" height="13" viewBox="0 0 12 13"><rect x="1" y="1.5" width="10" height="7" fill="none" stroke="#222" stroke-width="1.6"/><path d="M4 11.5 H8 L6 9 Z" fill="#222"/></svg>
<div class="t" style="top:581.00px;left:1491.70px;transform-origin:0 0;font-size:13px;color:#333;transform:scaleX(0.785);">Pages</div>
<svg class="r" style="left:1524px;top:585px;" width="7" height="5" viewBox="0 0 7 5"><path d="M0.5 0.5 H6.5 L3.5 4 Z" fill="#333"/></svg>
<div class="r" style="left:893px;top:611px;width:651px;height:1px;background:#dedede"></div>
<div class="r" style="left:918px;top:639px;width:388px;height:1px;background:#e3e3e3"></div>
<div class="t" style="top:634.14px;right:670.00px;transform-origin:100% 0;font-size:12px;color:#777;transform:scaleX(0.85);">5</div>
<div class="r" style="left:918px;top:699px;width:388px;height:1px;background:#e3e3e3"></div>
<div class="t" style="top:694.14px;right:670.00px;transform-origin:100% 0;font-size:12px;color:#777;transform:scaleX(0.85);">4</div>
<div class="r" style="left:918px;top:759px;width:388px;height:1px;background:#e3e3e3"></div>
<div class="t" style="top:754.14px;right:670.00px;transform-origin:100% 0;font-size:12px;color:#777;transform:scaleX(0.85);">3</div>
<div class="r" style="left:918px;top:879px;width:388px;height:1px;background:#e3e3e3"></div>
<div class="t" style="top:874.14px;right:670.00px;transform-origin:100% 0;font-size:12px;color:#777;transform:scaleX(0.85);">1</div>
<div class="r" style="left:918px;top:939px;width:388px;height:1px;background:#e3e3e3"></div>
<div class="t" style="top:934.14px;right:670.00px;transform-origin:100% 0;font-size:12px;color:#777;transform:scaleX(0.85);">0</div>
<div class="t" style="top:950.24px;left:518.00px;width:800px;text-align:center;font-size:12px;color:#777;"><span style="display:inline-block;transform:scaleX(0.854);transform-origin:50% 0">2014-08-01</span></div>
<div class="t" style="top:950.24px;left:673.00px;width:800px;text-align:center;font-size:12px;color:#777;"><span style="display:inline-block;transform:scaleX(0.854);transform-origin:50% 0">2014-08-03</span></div>
<div class="t" style="top:950.24px;left:828.00px;width:800px;text-align:center;font-size:12px;color:#777;"><span style="display:inline-block;transform:scaleX(0.854);transform-origin:50% 0">2014-08-05</span></div>
<svg class="r" style="left:880px;top:600px;" width="440" height="384" viewBox="0 0 440 384"><g transform="translate(-880 -600)"><path d="M918.50 879.00 C937.85 879.00 976.55 879.00 995.90 879.00 C1015.25 879.00 1053.95 879.00 1073.30 879.00 C1092.65 879.00 1131.35 909.00 1150.70 879.00 C1170.05 849.00 1208.75 639.00 1228.10 639.00 C1247.45 639.00 1286.15 819.00 1305.50 879.00" stroke="#4d7f94" stroke-width="3" fill="none"/><circle cx="918.5" cy="879.0" r="0.9" fill="#fff"/><circle cx="1073.3" cy="879.0" r="0.9" fill="#fff"/><circle cx="1150.7" cy="879.0" r="0.9" fill="#fff"/><circle cx="1228.1" cy="639.0" r="0.9" fill="#fff"/><circle cx="1305.5" cy="879.0" r="0.9" fill="#fff"/></g></svg>
<div class="t" style="top:643.68px;left:1327.20px;transform-origin:0 0;font-size:22px;color:#222;transform:scaleX(0.759);">Top 5 Pages</div>
<div class="t" style="top:692.65px;left:1327.00px;transform-origin:0 0;font-size:14px;color:#444;transform:scaleX(0.76);">Home</div>
<div class="t" style="top:692.65px;right:35.00px;transform-origin:100% 0;font-size:14px;color:#444;transform:scaleX(0.763);">Page Views: 625</div>
<div class="r" style="left:1326px;top:712px;width:217px;height:8px;background:#e9e9e9;border-radius:1px"></div>
<div class="r" style="left:1326px;top:712px;width:89px;height:8px;background:#a8001c"></div>
<div class="t" style="top:738.95px;left:1327.00px;transform-origin:0 0;font-size:14px;color:#444;transform:scaleX(0.76);">Dogs For Sale</div>
<div class="t" style="top:738.95px;right:35.00px;transform-origin:100% 0;font-size:14px;color:#444;transform:scaleX(0.763);">Page Views: 489</div>
<div class="r" style="left:1326px;top:759px;width:217px;height:7px;background:#e9e9e9;border-radius:1px"></div>
<div class="r" style="left:1326px;top:759px;width:70px;height:7px;background:#a8001c"></div>
<div class="t" style="top:785.45px;left:1327.00px;transform-origin:0 0;font-size:14px;color:#444;transform:scaleX(0.76);">Pet Products</div>
<div class="t" style="top:785.45px;right:35.00px;transform-origin:100% 0;font-size:14px;color:#444;transform:scaleX(0.763);">Page Views: 68</div>
<div class="r" style="left:1326px;top:805px;width:217px;height:7px;background:#e9e9e9;border-radius:1px"></div>
<div class="r" style="left:1326px;top:805px;width:10px;height:7px;background:#a8001c"></div>
<div class="t" style="top:831.55px;left:1327.00px;transform-origin:0 0;font-size:14px;color:#444;transform:scaleX(0.76);">Training</div>
<div class="t" style="top:831.55px;right:35.00px;transform-origin:100% 0;font-size:14px;color:#444;transform:scaleX(0.763);">Page Views: 42</div>
<div class="r" style="left:1326px;top:851px;width:217px;height:7px;background:#e9e9e9;border-radius:1px"></div>
<div class="r" style="left:1326px;top:851px;width:6px;height:7px;background:#a8001c"></div>
<div class="t" style="top:877.65px;left:1327.00px;transform-origin:0 0;font-size:14px;color:#444;transform:scaleX(0.76);">Boarding</div>
<div class="t" style="top:877.65px;right:35.00px;transform-origin:100% 0;font-size:14px;color:#444;transform:scaleX(0.763);">Page Views: 39</div>
<div class="r" style="left:1326px;top:898px;width:217px;height:6px;background:#e9e9e9;border-radius:1px"></div>
<div class="r" style="left:1326px;top:898px;width:6px;height:6px;background:#a8001c"></div>
<div class="r" style="left:1564px;top:0px;width:14px;height:984px;background:#f1f1f1"></div>
<div class="r" style="left:1566px;top:19px;width:10px;height:882px;background:#c1c1c1;border:1px solid #a9a9a9"></div>
<svg class="r" style="left:1566px;top:6px;" width="11" height="9" viewBox="0 0 11 9"><path d="M2 7 L5.5 3 L9 7 Z" fill="#a3a3a3"/></svg>
<svg class="r" style="left:1566px;top:969px;" width="11" height="9" viewBox="0 0 11 9"><path d="M2 2 L5.5 6 L9 2 Z" fill="#505050"/></svg>
</body></html>
